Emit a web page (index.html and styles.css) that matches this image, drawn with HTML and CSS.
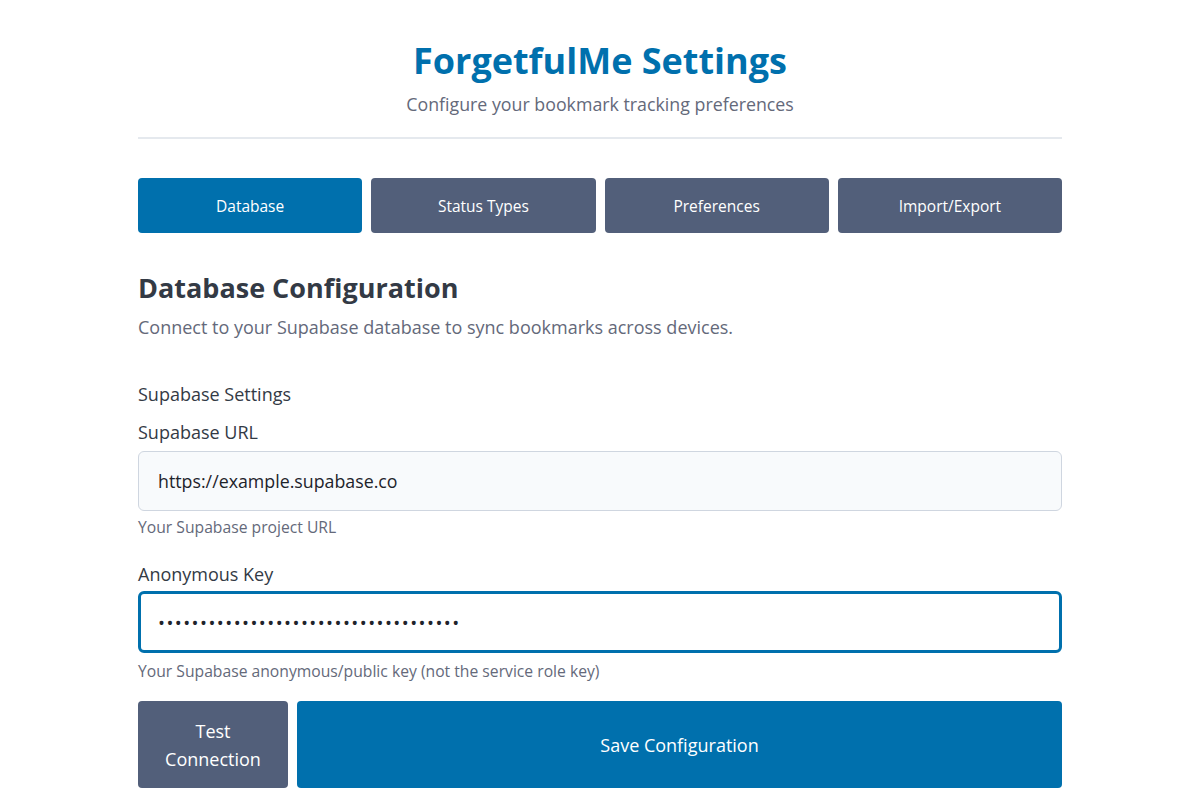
FILE: index.html
```html
<!DOCTYPE html>
<html lang="en">
<head>
<meta charset="utf-8">
<title>ForgetfulMe Settings</title>
<link rel="stylesheet" href="styles.css">
</head>
<body>
<div class="container">
  <header class="header">
    <h1 class="title">ForgetfulMe Settings</h1>
    <p class="subtitle">Configure your bookmark tracking preferences</p>
  </header>
  <nav class="tabs">
    <button class="tab active">Database</button>
    <button class="tab">Status Types</button>
    <button class="tab">Preferences</button>
    <button class="tab">Import/Export</button>
  </nav>
  <section class="section">
    <h2 class="section-title">Database Configuration</h2>
    <p class="section-desc">Connect to your Supabase database to sync bookmarks across devices.</p>
    <div class="group-label">Supabase Settings</div>
    <div class="field">
      <label class="label" for="url">Supabase URL</label>
      <input class="input" id="url" type="text" value="https://example.supabase.co">
      <div class="help">Your Supabase project URL</div>
    </div>
    <div class="field">
      <label class="label" for="key">Anonymous Key</label>
      <input class="input focused" id="key" type="password" value="abcdefghijklmnopqrstuvwxyz0123456789">
      <div class="help">Your Supabase anonymous/public key (not the service role key)</div>
    </div>
    <div class="actions">
      <button class="btn btn-secondary">Test<br>Connection</button>
      <button class="btn btn-primary">Save Configuration</button>
    </div>
  </section>
</div>
</body>
</html>
```
FILE: styles.css
```css
* { box-sizing: border-box; }
html, body { margin: 0; padding: 0; background: #ffffff; }
body {
  font-family: "Open Sans", "Noto Sans", "Liberation Sans", sans-serif;
  color: #333a45;
}
.container {
  width: 924px;
  margin: 0 auto;
}
.header {
  text-align: center;
  padding-top: 35px;
  padding-bottom: 20px;
  border-bottom: 2px solid #e5e9ee;
}
.title {
  margin: 0;
  font-size: 36px;
  line-height: 52px;
  font-weight: 700;
  color: #0070ad;
}
.subtitle {
  margin: 4px 0 0;
  font-size: 17.8px;
  line-height: 26px;
  color: #64697a;
}
.tabs {
  display: grid;
  grid-template-columns: repeat(4, 1fr);
  gap: 9px;
  margin-top: 39px;
}
.tab {
  height: 55px;
  border: none;
  border-radius: 4px;
  background: #525f7a;
  color: #ffffff;
  font-family: inherit;
  font-size: 15.5px;
}
.tab.active { background: #0070ad; }
.section { padding-top: 36px; }
.section-title {
  margin: 0;
  font-size: 27px;
  line-height: 38px;
  font-weight: 700;
  color: #333a45;
}
.section-desc {
  margin: 7px 0 0;
  font-size: 18px;
  line-height: 26px;
  color: #64697a;
}
.group-label {
  margin-top: 41px;
  font-size: 18px;
  line-height: 26px;
  color: #333a45;
}
.field { display: flex; flex-direction: column; }
.label {
  margin-top: 12px;
  font-size: 18px;
  line-height: 26px;
  color: #333a45;
}
.input {
  margin-top: 6px;
  height: 60px;
  padding: 0 19px;
  border: 1px solid #cfd6e0;
  border-radius: 6px;
  background: #f8fafc;
  font-family: inherit;
  font-size: 17.8px;
  color: #1e232b;
  outline: none;
}
.input.focused {
  margin-top: 4px;
  border: 3px solid #0070ad;
  background: #ffffff;
  height: 62px;
  padding: 0 17px;
  letter-spacing: 1.45px;
  font-size: 18.5px;
}
.help {
  margin-top: 4px;
  font-size: 15.7px;
  line-height: 24px;
  color: #64697a;
}
.input.focused + .help { margin-top: 6px; }
.field + .field .label { margin-top: 22px; }
.actions {
  display: flex;
  gap: 9px;
  margin-top: 18px;
}
.btn {
  height: 87px;
  border: none;
  border-radius: 4px;
  color: #ffffff;
  font-family: inherit;
  font-size: 18px;
  line-height: 28px;
}
.btn-secondary { width: 150px; background: #525f7a; }
.btn-primary { flex: 1; background: #0070ad; }
```
